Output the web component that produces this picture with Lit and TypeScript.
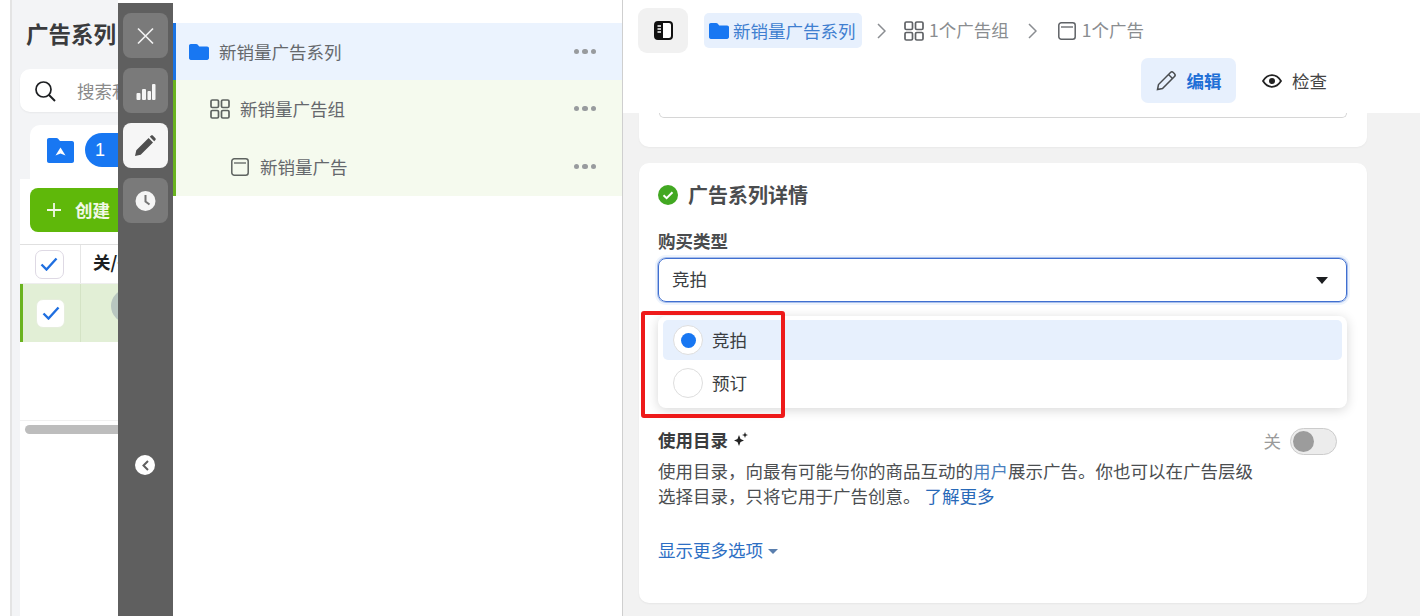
import { LitElement, html, css } from "lit";
import { customElement } from "lit/decorators.js";

const folder = (cls = "ico20") => html`<svg class=${cls} viewBox="0 0 20 16"><path fill="#1877f2" d="M1.800 0h5.400c.6 0 1 .2 1.400.6L10.200 2.400h7.900c1 0 1.900.8 1.900 1.800v9.900c0 1-.9 1.900-1.900 1.900H1.800C.8 16 0 15.100 0 14.100V1.800C0 .8.800 0 1.800 0z"/></svg>`;
const grid = () => html`<svg class="ico20" viewBox="0 0 20 20" fill="none" stroke="currentColor" stroke-width="1.700"><rect x="1" y="1" width="7.500" height="7.500" rx="1.300"/><rect x="11.500" y="1" width="7.500" height="7.500" rx="1.300"/><rect x="1" y="11.500" width="7.500" height="7.500" rx="1.300"/><rect x="11.500" y="11.500" width="7.500" height="7.500" rx="1.300"/></svg>`;
const adIcon = () => html`<svg class="ico20" viewBox="0 0 20 20" fill="none" stroke="currentColor" stroke-width="1.500"><rect x="1.800" y="1.800" width="16.400" height="16.400" rx="2.500"/><path d="M4 6h12" stroke-width="1.300"/></svg>`;
const dots = () => html`<span class="dots"><i></i><i></i><i></i></span>`;
const check = () => html`<svg class="tick" viewBox="0 0 18 14" fill="none"><path d="M1.500 7.500l5 5L16.500 1.500" stroke="#1f6fe0" stroke-width="2.400"/></svg>`;
const chev = (cls = "chev") => html`<svg class=${cls} viewBox="0 0 9 16" fill="none"><path d="M1 1l7 7-7 7" stroke="#8a8d91" stroke-width="1.500"/></svg>`;

@customElement("app-root")
export class AppRoot extends LitElement {
  static styles = css`
    :host { display: block; width: 1420px; height: 616px; overflow: hidden; background: #fff;
      font-family: "Noto Sans CJK SC", "Noto Sans", sans-serif; font-size: 17.500px; color: #3a3d40; }
    * { box-sizing: border-box; }
    .root { display: grid; grid-template-columns: 118px 55px 450px 797px; height: 616px; }
    .ico20 { width: 20px; height: 20px; flex: none; display: block; }

    /* left panel */
    .left { overflow: hidden; padding-left: 10px; background: #fff; }
    .left-in { width: 300px; height: 616px; border-left: 2px solid #e4e4e4; background: #f3f4f6; padding: 18px 0 0 8px; position: relative; }
    .title { font-size: 22.500px; font-weight: 700; color: #3a3b3d; line-height: 30px; margin-left: 6px; white-space: nowrap; }
    .search { margin-top: 21px; height: 43px; background: #fff; border-radius: 10px; display: flex; align-items: center; padding-left: 14px; gap: 21px; color: #8a8a8a; white-space: nowrap; box-shadow: 0 1px 2px rgba(0,0,0,.05); }
    .search svg { width: 22px; height: 22px; flex: none; }
    .tab { margin: 13px 0 0 10px; height: 54px; background: #fff; border-radius: 10px 0 0 0; display: flex; align-items: center; padding: 0 0 4px 17px; gap: 11px; }
    .tab svg { width: 27px; height: 25px; }
    .badge { width: 60px; height: 34px; border-radius: 17px; background: #1877f2; color: #fff; font-family: "Liberation Sans", sans-serif; font-size: 18px; display: flex; align-items: center; padding-left: 10px; }
    .lcard { height: 500px; background: #fff; padding-top: 9px; }
    .create { margin-left: 10px; width: 150px; height: 44px; border-radius: 8px; background: #5fb80a; color: #f1f8e6; font-weight: 700; display: flex; align-items: center; padding-left: 17px; gap: 14px; font-size: 17.500px; }
    .create span { padding-bottom: 2px; }
    .create svg { width: 14px; height: 14px; }
    .thead { margin-top: 12px; height: 40px; display: flex; border-top: 1px solid #e0e0e0; border-bottom: 1px solid #eee; }
    .thead .c1, .trow .c1 { width: 61px; flex: none; display: flex; align-items: center; justify-content: center; border-right: 1px solid #e6e6e6; padding-right: 2px; }
    .thead b { color: #1c1e21; margin-left: 12px; line-height: 34px; white-space: nowrap; }
    .box { width: 29px; height: 29px; border-radius: 7px; background: #fff; border: 1px solid #ded9e4; display: flex; align-items: center; justify-content: center; }
    .tick { width: 18px; height: 14px; }
    .trow { height: 58px; display: flex; background: #e2efd6; border-left: 3px solid #6ab31e; }
    .trow .c1 { width: 58px; border-right-color: #d4e3c5; }
    .trow .box { border-color: #e6eedd; }
    .knob { width: 34px; height: 34px; border-radius: 50%; background: #b8c6c0; margin: 5px 0 0 30px; flex: none; }
    .hscroll { margin-top: 78px; border-top: 1px solid #f0f0f0; padding: 4px 0 0 5px; }
    .hscroll i { display: block; height: 9px; border-radius: 5px; background: #bdbdbd; }

    /* rail */
    .rail { margin-top: 3px; background: #5f5f5f; display: flex; flex-direction: column; align-items: center; padding-top: 10px; }
    .rbtn { width: 45px; height: 45px; border-radius: 8px; background: #7a7a7a; display: flex; align-items: center; justify-content: center; margin-bottom: 10px; }
    .rbtn.on { background: #f6f6f6; }
    .rbtn svg { width: 22px; height: 22px; }
    .back { width: 20px; height: 20px; border-radius: 50%; background: #fff; margin: 222px 1px 0 0; display: flex; align-items: center; justify-content: center; }
    .back svg { width: 7px; height: 11px; }

    /* tree */
    .tree { padding-top: 23px; border-right: 1px solid #cfcfcf; width: 450px; }
    .node { height: 58px; display: flex; align-items: center; color: #65686c; gap: 10px; border-left: 3px solid #69b41e; background: #f5faee; padding: 0 26px 1px 0; }
    .node.blue { height: 57px; border-left-color: #1b74e4; background: #ebf3fe; padding: 0 26px 0 13px; }
    .node.l2 { padding-left: 34px; }
    .node.l3 { padding-left: 54px; }
    .node .ico20 { color: #5e6360; }
    .dots { margin-left: auto; display: flex; gap: 3px; }
    .dots i { width: 5.500px; height: 5.500px; border-radius: 50%; background: #989b9e; }

    /* right */
    .right { background: #f2f2f2; position: relative; height: 616px; display: flex; flex-direction: column; }
    .head { height: 113px; background: #fff; padding: 8px 0 0 15px; flex: none; }
    .crumbs { display: flex; align-items: center; height: 45px; color: #8a8d90; }
    .toggle { width: 50px; height: 45px; background: #f1f1f1; border-radius: 9px; display: flex; align-items: center; justify-content: center; margin-right: 16px; }
    .toggle svg { width: 19px; height: 19px; }
    .chip { height: 35px; width: 158px; background: #e7f0fd; border-radius: 5px; display: flex; align-items: center; padding-left: 5px; gap: 4px; color: #3f7fd0; white-space: nowrap; }
    .chev { width: 9px; height: 16px; margin: 0 18px 0 15px; flex: none; }
    .chev2 { width: 9px; height: 16px; margin: 0 20px 0 19px; flex: none; }
    .crumb { display: flex; align-items: center; gap: 5px; white-space: nowrap; }
    .crumb span { padding-bottom: 2px; }
    .crumb .ico20 { color: #5f6266; }
    .actions { display: flex; justify-content: flex-end; align-items: center; height: 45px; margin-top: 5px; padding-right: 93px; }
    .edit { width: 95px; height: 45px; background: #e7f0fd; border-radius: 7px; display: flex; align-items: center; justify-content: center; gap: 10px; color: #1f6fd6; font-weight: 700; }
    .edit svg { width: 21px; height: 21px; }
    .insp { display: flex; align-items: center; gap: 10px; margin-left: 26px; color: #444; }
    .insp svg { width: 20px; height: 14px; }
    .body { padding: 0 53px 0 16px; flex: 1; min-height: 0; }
    .card { background: #fff; border-radius: 0 0 10px 10px; }
    .card.top { height: 34px; padding: 0 20px; box-shadow: 0 1px 2px rgba(0,0,0,.04); }
    .card.top div { height: 5px; border: 1px solid #d6d6d6; border-top: 0; border-radius: 0 0 8px 8px; }
    .card.main { margin-top: 16px; height: 440px; border-radius: 10px; padding: 18px 20px 0 19px; box-shadow: 0 1px 2px rgba(0,0,0,.05); position: relative; }
    .ctitle { display: flex; align-items: center; gap: 10px; font-size: 20px; font-weight: 700; color: #4a4c4e; height: 28px; line-height: 28px; }
    .ctitle svg { width: 20px; height: 20px; }
    .label { margin-top: 19px; font-weight: 700; color: #4a4c4e; line-height: 26px; height: 26px; font-size: 17.500px; }
    .select { margin-top: 4px; height: 44px; width: 689px; border: 1px solid #3f6fd0; border-radius: 8px; box-shadow: 0 0 0 1px rgba(63,111,208,.4), 0 0 0 3px #eef4fd; display: flex; align-items: center; padding: 0 18px 0 13px; justify-content: space-between; }
    .select span { padding-bottom: 4px; }
    .caret { width: 0; height: 0; border: 6px solid transparent; border-top: 7px solid #1c1e21; border-bottom: 0; }
    .row { margin-top: 126px; display: flex; justify-content: space-between; width: 679px; }
    .rowt { display: flex; align-items: center; gap: 5px; font-weight: 700; color: #3a3c3e; height: 26px; font-size: 17.500px; }
    .rowt span { padding-bottom: 4px; }
    .rowt svg { width: 15px; height: 15px; margin-bottom: 4px; }
    .para { width: 600px; line-height: 25px; margin-top: 4px; color: #4b4e51; }
    .switchw { display: flex; align-items: center; gap: 9px; color: #9a9a9a; height: 26px; }
    .switchw > span:first-child { padding-bottom: 2px; }
    .switch { width: 47px; height: 27px; border-radius: 14px; background: #ececec; border: 1px solid #ccc; padding: 2px; }
    .switch i { display: block; width: 21px; height: 21px; border-radius: 50%; background: #9c9c9c; }
    a { color: #2869b8; text-decoration: none; }
    .lk { color: #4a7fbe; }
    .more { margin-top: 29px; line-height: 26px; display: flex; align-items: center; gap: 5px; color: #2d6fc4; }
    .more i { width: 0; height: 0; border: 5px solid transparent; border-top: 5px solid #5a7fae; border-bottom: 0; margin-top: 3px; }

    /* overlays */
    .menu { position: absolute; left: 35px; top: 316px; width: 689px; height: 92px; background: #fff; border-radius: 8px; box-shadow: 0 2px 12px rgba(0,0,0,.16); padding: 4px 5px; }
    .opt { height: 40px; border-radius: 5px; display: flex; align-items: center; gap: 9px; padding-left: 10px; }
    .opt.on { background: #e7f0fd; }
    .opt + .opt { margin-top: 3px; }
    .opt > span:last-child { padding-bottom: 2px; }
    .radio { width: 30px; height: 30px; border-radius: 50%; background: #fff; border: 1px solid #dedede; display: flex; align-items: center; justify-content: center; flex: none; }
    .radio i { width: 15px; height: 15px; border-radius: 50%; background: #1877f2; }
    .red { position: absolute; left: 18px; top: 311px; width: 144px; height: 107px; border: 4px solid #ee1a1a; border-radius: 3px; pointer-events: none; }
  `;

  render() {
    return html`<div class="root">
      <section class="left"><div class="left-in">
        <div class="title">广告系列</div>
        <div class="search">
          <svg viewBox="0 0 22 22" fill="none" stroke="#1c1e21" stroke-width="1.700"><circle cx="9.500" cy="9.500" r="7.500"/><path d="M15 15l6 6" stroke-width="2"/></svg>
          <span>搜索和筛选</span>
        </div>
        <div class="tab">
          <svg viewBox="0 0 27 25"><path fill="#1877f2" d="M2 0h7.500c.6 0 1 .2 1.400.6L13 3h12c1.100 0 2 .9 2 2v18c0 1.100-.9 2-2 2H2c-1.100 0-2-.9-2-2V2C0 .9.900 0 2 0z"/><path fill="#fff" d="M13.500 9.500l5 8-5-2-5 2z"/></svg>
          <span class="badge">1</span>
        </div>
        <div class="lcard">
          <div class="create"><svg viewBox="0 0 14 14" fill="none" stroke="#f1f8e6" stroke-width="1.800"><path d="M7 0v14M0 7h14"/></svg><span>创建</span></div>
          <div class="thead"><div class="c1"><span class="box">${check()}</span></div><b>关/开</b></div>
          <div class="trow"><div class="c1"><span class="box">${check()}</span></div><span class="knob"></span></div>
          <div class="hscroll"><i></i></div>
        </div>
      </div></section>

      <nav class="rail">
        <div class="rbtn"><svg viewBox="0 0 22 22" fill="none" stroke="#f2f2f2" stroke-width="1.700"><path d="M3 3.500l15 15M18 3.500l-15 15"/></svg></div>
        <div class="rbtn"><svg viewBox="0 0 22 22" fill="#f5f5f5"><rect x="1.500" y="13" width="4" height="7" rx="1"/><rect x="7" y="9" width="4" height="11" rx="1"/><rect x="12.500" y="11" width="3.500" height="9" rx="1"/><rect x="17" y="4" width="3.500" height="16" rx="1"/></svg></div>
        <div class="rbtn on"><svg viewBox="0 0 22 22" fill="#4f4f4f"><path d="M0 21l1.300-5.700L13.600 3 18 7.400 5.700 19.700zM14.800 1.800L16.100.6c.5-.5 1.200-.5 1.700 0l2.600 2.600c.5.5.5 1.200 0 1.700l-1.200 1.300z"/></svg></div>
        <div class="rbtn"><svg viewBox="0 0 22 22"><circle cx="10.500" cy="11" r="10" fill="#f5f5f5"/><path d="M10.500 5v6.500l4 3" fill="none" stroke="#757575" stroke-width="2"/></svg></div>
        <div class="back"><svg viewBox="0 0 7 11" fill="none"><path d="M6 1L1.500 5.500 6 10" stroke="#5f5f5f" stroke-width="2"/></svg></div>
      </nav>

      <section class="tree">
        <div class="node blue">${folder()}<span>新销量广告系列</span>${dots()}</div>
        <div class="node l2">${grid()}<span>新销量广告组</span>${dots()}</div>
        <div class="node l3">${adIcon()}<span>新销量广告</span>${dots()}</div>
      </section>

      <main class="right">
        <header class="head">
          <div class="crumbs">
            <div class="toggle"><svg viewBox="0 0 19 19"><rect x="1" y="1" width="17" height="17" rx="3" fill="#fff" stroke="#111" stroke-width="2"/><path fill="#111" d="M3 1h6v17H3a2 2 0 0 1-2-2V3a2 2 0 0 1 2-2z"/><path stroke="#fff" stroke-width="1.300" d="M3.500 5h3.500M3.500 8h3.500M3.500 11h3.500"/></svg></div>
            <div class="chip">${folder()}<span>新销量广告系列</span></div>
            ${chev()}
            <div class="crumb">${grid()}<span>1个广告组</span></div>
            ${chev("chev2")}
            <div class="crumb">${adIcon()}<span>1个广告</span></div>
          </div>
          <div class="actions">
            <div class="edit"><svg viewBox="0 0 21 21" fill="none" stroke="#4a4d50" stroke-width="1.500"><path d="M1.500 19.500l1-5L14.500 2.500a2 2 0 0 1 2.800 0l1.200 1.200a2 2 0 0 1 0 2.800L6.500 18.500z"/><path d="M12.500 4.500l4 4"/></svg><span>编辑</span></div>
            <div class="insp"><svg viewBox="0 0 20 14"><path fill="none" stroke="#222" stroke-width="1.800" d="M1 7c2.400-3.800 5.400-5.800 9-5.800S16.600 3.200 19 7c-2.400 3.800-5.400 5.800-9 5.800S3.400 10.800 1 7z"/><circle cx="10" cy="7" r="3" fill="#222"/></svg><span>检查</span></div>
          </div>
        </header>
        <div class="body">
          <div class="card top"><div></div></div>
          <div class="card main">
            <div class="ctitle"><svg viewBox="0 0 20 20"><circle cx="10" cy="10" r="10" fill="#42a822"/><path d="M5.500 10.200l3.100 3 5.900-6" fill="none" stroke="#fff" stroke-width="2"/></svg><span>广告系列详情</span></div>
            <div class="label">购买类型</div>
            <div class="select"><span>竞拍</span><i class="caret"></i></div>
            <div class="row">
              <div>
                <div class="rowt"><span>使用目录</span><svg viewBox="0 0 15 15" fill="#222"><path d="M6 3l1.500 4L11 8.500 7.500 10 6 14 4.500 10 1 8.500 4.500 7zM12 0l.8 2.200L15 3l-2.200.8L12 6l-.8-2.200L9 3l2.200-.8z"/></svg></div>
                <div class="para">使用目录，向最有可能与你的商品互动的<span class="lk">用户</span>展示广告。你也可以在广告层级选择目录，只将它用于广告创意。 <a>了解更多</a></div>
              </div>
              <div class="switchw"><span>关</span><span class="switch"><i></i></span></div>
            </div>
            <div class="more"><span>显示更多选项</span><i></i></div>
          </div>
        </div>
        <div class="menu">
          <div class="opt on"><span class="radio"><i></i></span><span>竞拍</span></div>
          <div class="opt"><span class="radio"></span><span>预订</span></div>
        </div>
        <div class="red"></div>
      </main>
    </div>`;
  }
}
